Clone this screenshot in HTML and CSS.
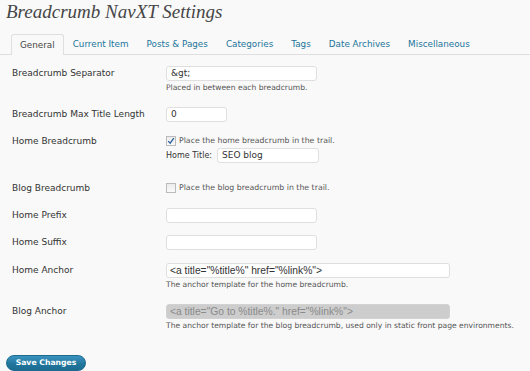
FILE: index.html
```html
<!DOCTYPE html>
<html>
<head>
<meta charset="utf-8">
<link rel="stylesheet" href="styles.css">
</head>
<body>
<div class="wrap">
  <h2 class="title">Breadcrumb NavXT Settings</h2>
  <div class="tabs">
    <span class="tab active">General</span>
    <span class="tab">Current Item</span>
    <span class="tab">Posts &amp; Pages</span>
    <span class="tab">Categories</span>
    <span class="tab">Tags</span>
    <span class="tab">Date Archives</span>
    <span class="tab">Miscellaneous</span>
  </div>
  <div class="form">
    <div class="row">
      <div class="label">Breadcrumb Separator</div>
      <div class="field">
        <div class="input w150">&amp;gt;</div>
        <div class="desc">Placed in between each breadcrumb.</div>
      </div>
    </div>
    <div class="row">
      <div class="label">Breadcrumb Max Title Length</div>
      <div class="field">
        <div class="input w60">0</div>
      </div>
    </div>
    <div class="row">
      <div class="label">Home Breadcrumb</div>
      <div class="field">
        <div class="check-line"><span class="checkbox"><svg viewBox="0 0 10 10" width="8" height="8"><path d="M1.5 5.2 L4 7.8 L8.5 1.5" fill="none" stroke="#2a5fa0" stroke-width="1.6"/></svg></span>Place the home breadcrumb in the trail.</div>
        <div class="sub-line"><span class="sub-label">Home Title:</span><div class="input w101">SEO blog</div></div>
      </div>
    </div>
    <div class="row">
      <div class="label">Blog Breadcrumb</div>
      <div class="field">
        <div class="check-line"><span class="checkbox"></span>Place the blog breadcrumb in the trail.</div>
      </div>
    </div>
    <div class="row">
      <div class="label">Home Prefix</div>
      <div class="field"><div class="input w150"></div></div>
    </div>
    <div class="row">
      <div class="label">Home Suffix</div>
      <div class="field"><div class="input w150"></div></div>
    </div>
    <div class="row row-anchor">
      <div class="label">Home Anchor</div>
      <div class="field">
        <div class="input w283 anchor">&lt;a title="%title%" href="%link%"&gt;</div>
        <div class="desc">The anchor template for the home breadcrumb.</div>
      </div>
    </div>
    <div class="row">
      <div class="label">Blog Anchor</div>
      <div class="field">
        <div class="input w283 anchor disabled">&lt;a title="Go to %title%." href="%link%"&gt;</div>
        <div class="desc">The anchor template for the blog breadcrumb, used only in static front page environments.</div>
      </div>
    </div>
  </div>
  <div class="submit"><span class="button">Save Changes</span></div>
</div>
</body>
</html>
```
FILE: styles.css
```css
html, body {
  margin: 0;
  padding: 0;
  background: #f9f9f9;
}
body {
  font-family: "DejaVu Sans", Verdana, sans-serif;
  color: #333;
  width: 530px;
  height: 371px;
  overflow: hidden;
}
.title {
  margin: 0;
  padding: 0 0 0 6px;
  height: 34px;
  font-family: "Liberation Serif", Georgia, serif;
  font-style: italic;
  font-weight: normal;
  font-size: 19px;
  line-height: 24px;
  color: #464646;
}
.tabs {
  display: flex;
  align-items: flex-end;
  border-bottom: 1px solid #dfdfdf;
  padding-left: 11px;
  height: 20px;
}
.tab {
  font-size: 8.8px;
  line-height: 19px;
  padding: 0 9px;
  color: #21759b;
}
.tab.active {
  color: #464646;
  padding: 0 8px;
  border: 1px solid #dfdfdf;
  border-bottom: none;
  background: #f9f9f9;
  border-radius: 3px 3px 0 0;
  margin-bottom: -1px;
  line-height: 20px;
}
.form {
  margin-top: 5px;
}
.row {
  display: flex;
  padding: 6px 0;
}
.row-anchor {
  padding-top: 7px;
}
.label {
  width: 154px;
  padding-left: 12px;
  font-size: 9px;
  line-height: 15px;
  color: #333;
  flex: none;
}
.field {
  display: flex;
  flex-direction: column;
  align-items: flex-start;
}
.input {
  box-sizing: border-box;
  height: 15px;
  border: 1px solid #dfdfdf;
  border-radius: 3px;
  background: #fff;
  font-size: 9px;
  line-height: 13px;
  padding: 0 4px;
  color: #333;
  white-space: nowrap;
}
.anchor {
  font-family: "Liberation Sans", Arial, sans-serif;
  font-size: 10.3px;
  padding: 0 3px;
}
.w150 { width: 151px; }
.w60 { width: 61px; }
.w101 { width: 102px; }
.w283 { width: 284px; }
.disabled {
  background: #cdcdcd;
  border-color: #d2d2d2;
  color: #8a8a8a;
}
.desc {
  font-size: 7.6px;
  line-height: 14px;
  color: #555;
}
.check-line {
  display: flex;
  align-items: center;
  font-size: 7.8px;
  line-height: 14px;
  color: #555;
  height: 14px;
}
.checkbox {
  box-sizing: border-box;
  width: 10px;
  height: 10px;
  border: 1px solid #bbb;
  background: linear-gradient(#ececec, #fafafa);
  margin-right: 3px;
  display: flex;
  align-items: center;
  justify-content: center;
}
.sub-line {
  display: flex;
  align-items: center;
  margin-bottom: 6px;
  height: 15px;
}
.sub-label {
  font-size: 8px;
  color: #333;
  margin-right: 5px;
}
.submit {
  padding: 11px 0 0 6px;
}
.button {
  display: inline-block;
  box-sizing: border-box;
  width: 80px;
  height: 16px;
  border-radius: 8px;
  border: 1px solid #1d6a8f;
  background: linear-gradient(#3a93c0, #21759b 60%, #1d6c91);
  color: #fff;
  font-weight: bold;
  font-size: 7.7px;
  line-height: 14px;
  text-align: center;
}
```
